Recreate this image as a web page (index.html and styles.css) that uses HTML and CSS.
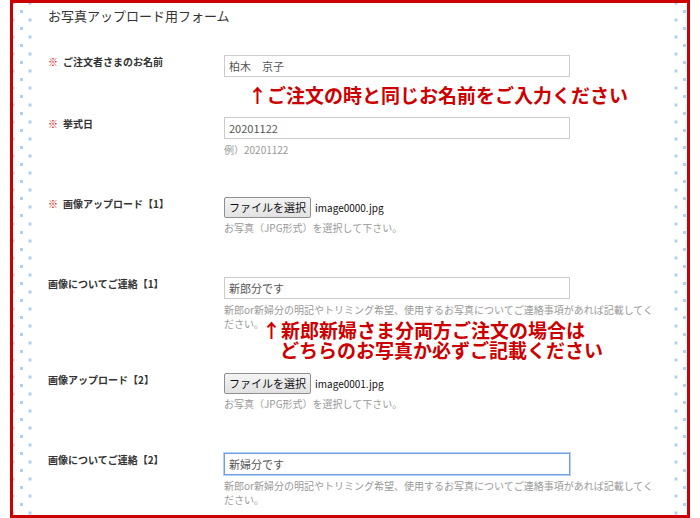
FILE: index.html
```html
<!DOCTYPE html>
<html lang="ja">
<head>
<meta charset="utf-8">
<title>お写真アップロード用フォーム</title>
<link rel="stylesheet" href="styles.css">
</head>
<body>
<div class="frame">
  <div class="panel">
    <h1 class="title">お写真アップロード用フォーム</h1>

    <div class="row">
      <div class="label"><span class="req">※</span>ご注文者さまのお名前</div>
      <div class="field">
        <input class="text" type="text" value="柏木　京子">
        <div class="note note-name">↑ご注文の時と同じお名前をご入力ください</div>
      </div>
    </div>

    <div class="row">
      <div class="label"><span class="req">※</span>挙式日</div>
      <div class="field">
        <input class="text" type="text" value="20201122">
        <p class="help">例）20201122</p>
      </div>
    </div>

    <div class="row row-wide">
      <div class="label"><span class="req">※</span>画像アップロード【1】</div>
      <div class="field">
        <div class="file"><button class="file-btn" type="button">ファイルを選択</button><span class="file-name">image0000.jpg</span></div>
        <p class="help help-file">お写真（JPG形式）を選択して下さい。</p>
      </div>
    </div>

    <div class="row row-wide">
      <div class="label">画像についてご連絡【1】</div>
      <div class="field">
        <input class="text" type="text" value="新郎分です">
        <p class="help">新郎or新婦分の明記やトリミング希望、使用するお写真についてご連絡事項があれば記載してください。</p>
        <div class="note note-both"><span class="note-line">↑新郎新婦さま分両方ご注文の場合は</span><span class="note-line note-indent">どちらのお写真か必ずご記載ください</span></div>
      </div>
    </div>

    <div class="row row-wide">
      <div class="label">画像アップロード【2】</div>
      <div class="field">
        <div class="file"><button class="file-btn" type="button">ファイルを選択</button><span class="file-name">image0001.jpg</span></div>
        <p class="help help-file">お写真（JPG形式）を選択して下さい。</p>
      </div>
    </div>

    <div class="row">
      <div class="label">画像についてご連絡【2】</div>
      <div class="field">
        <input class="text text-focus" type="text" value="新婦分です">
        <p class="help">新郎or新婦分の明記やトリミング希望、使用するお写真についてご連絡事項があれば記載してください。</p>
      </div>
    </div>
  </div>
</div>
</body>
</html>
```
FILE: styles.css
```css
html, body {
  margin: 0;
  padding: 0;
  background: #ffffff;
}

body {
  font-family: "Noto Sans CJK JP", sans-serif;
  color: #333333;
}

.frame {
  margin-left: 10px;
  width: 680px;
  height: 518px;
  box-sizing: border-box;
  border: 3px solid #cc0000;
  overflow: hidden;
  background-color: #ffffff;
  background-image:
    radial-gradient(circle, #add0f2 1.4px, rgba(173, 208, 242, 0) 2px),
    radial-gradient(circle, #add0f2 1.4px, rgba(173, 208, 242, 0) 2px);
  background-size: 17px 17px, 17px 17px;
  background-position: 0 0, 8.5px 8.5px;
}

.panel {
  margin: 0 17px 0 23px;
  height: 100%;
  background: #ffffff;
  padding: 3px 0 0 12px;
  box-sizing: border-box;
}

.title {
  margin: 0 0 29px;
  font-size: 13px;
  line-height: 20px;
  font-weight: normal;
  color: #333333;
}

.row {
  display: grid;
  grid-template-columns: 176px 440px;
  margin-bottom: 40px;
}

.row-wide {
  margin-bottom: 42px;
}

.label {
  font-size: 10px;
  line-height: 14px;
  font-weight: bold;
  color: #333333;
}

.req {
  color: #e60000;
  font-weight: normal;
  margin-right: 5px;
}

.field {
  position: relative;
}

.text {
  display: block;
  width: 346px;
  height: 22px;
  box-sizing: border-box;
  margin: 0;
  padding: 0 4px;
  border: 1px solid #cccccc;
  border-radius: 0;
  font-family: "Noto Sans CJK JP", sans-serif;
  font-size: 11px;
  color: #555555;
  background: #ffffff;
  outline: none;
}

.text-focus {
  border-color: #6f9fe0;
  box-shadow: 0 0 0 1px rgba(120, 165, 230, 0.55);
}

.help {
  margin: 4px 0 0;
  width: 430px;
  font-size: 10px;
  line-height: 14px;
  color: #999999;
}

.help-file {
  margin-top: 3px;
}

.file {
  display: flex;
  align-items: center;
  height: 21px;
}

.file-btn {
  height: 21px;
  box-sizing: border-box;
  margin: 0 4px 0 0;
  padding: 0 4px;
  border: 1px solid #8f8f8f;
  border-radius: 2px;
  background: linear-gradient(#f4f4f4, #e2e2e2);
  font-family: "Noto Sans CJK JP", sans-serif;
  font-size: 11px;
  line-height: 19px;
  color: #111111;
}

.file-name {
  font-size: 10px;
  color: #111111;
}

.note {
  position: absolute;
  color: #cc0000;
  font-weight: bold;
  font-size: 19px;
  white-space: nowrap;
}

.note-name {
  left: 24px;
  top: 28px;
  line-height: 24px;
}

.note-both {
  left: 38px;
  top: 43px;
  line-height: 20px;
}

.note-line {
  display: block;
}

.note-indent {
  padding-left: 18px;
}
```
